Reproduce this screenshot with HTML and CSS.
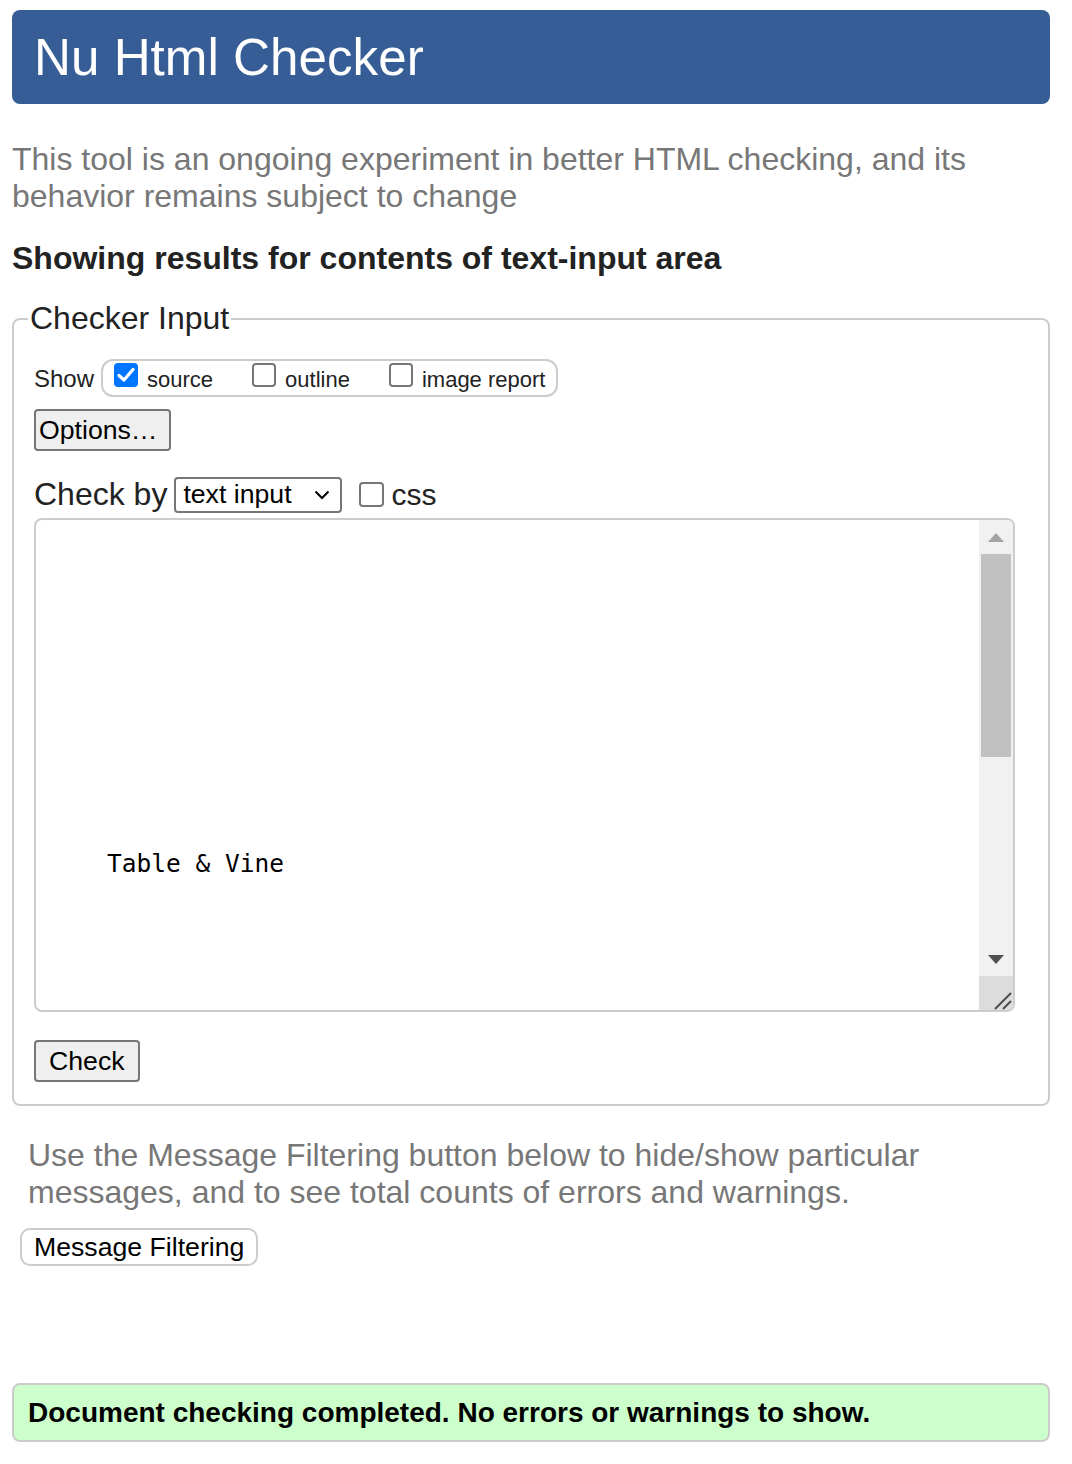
FILE: index.html
```html
<!DOCTYPE html>
<html lang="en">
<head>
<meta charset="utf-8">
<title>Nu Html Checker</title>
<link rel="stylesheet" href="styles.css">
</head>
<body>
<h1 class="title">Nu Html Checker</h1>
<p class="intro">This tool is an ongoing experiment in better HTML checking, and its behavior remains subject to change</p>
<h2 class="results-heading">Showing results for contents of text-input area</h2>
<form class="checker-form">
  <fieldset class="checker-input">
    <legend class="checker-legend">Checker Input</legend>
    <div class="show-row">
      <span class="show-label">Show</span>
      <div class="show-box">
        <label class="opt"><span class="cb cb-checked"><svg width="18" height="16" viewBox="0 0 18 16"><path d="M2 8.5 L7 13 L16 2.5" fill="none" stroke="#fff" stroke-width="3.2" stroke-linecap="round" stroke-linejoin="round"/></svg></span><span class="opt-text">source</span></label>
        <label class="opt"><span class="cb"></span><span class="opt-text">outline</span></label>
        <label class="opt"><span class="cb"></span><span class="opt-text">image report</span></label>
      </div>
    </div>
    <button type="button" class="btn btn-options">Options…</button>
    <div class="checkby-row">
      <span class="checkby-label">Check by</span>
      <span class="select"><span>text input</span><svg width="16" height="10" viewBox="0 0 16 10"><path d="M1.5 1.5 L8 8 L14.5 1.5" fill="none" stroke="#000" stroke-width="2"/></svg></span>
      <label class="opt opt-css"><span class="cb"></span><span class="css-text">css</span></label>
    </div>
    <div class="editor">
      <div class="editor-text">Table &amp; Vine</div>
      <div class="vscroll">
        <div class="sb-btn"><svg width="16" height="9" viewBox="0 0 16 9"><path d="M0 9 L8 0 L16 9 Z" fill="#a3a3a3"/></svg></div>
        <div class="sb-track"><div class="sb-thumb"></div></div>
        <div class="sb-btn"><svg width="16" height="9" viewBox="0 0 16 9"><path d="M0 0 L16 0 L8 9 Z" fill="#505050"/></svg></div>
        <div class="sb-corner"><svg width="34" height="34" viewBox="0 0 34 34"><path d="M16 33 L32 17 M24 33 L32 25" stroke="#4d4d4d" stroke-width="2"/></svg></div>
      </div>
    </div>
    <button type="button" class="btn btn-check">Check</button>
  </fieldset>
</form>
<div class="filter-section">
  <p class="filter-note">Use the Message Filtering button below to hide/show particular messages, and to see total counts of errors and warnings.</p>
  <button type="button" class="btn btn-filter">Message Filtering</button>
</div>
<div class="success">Document checking completed. No errors or warnings to show.</div>
</body>
</html>
```
FILE: styles.css
```css
* { box-sizing: border-box; }
html { background: #fff; }
body {
  margin: 0;
  padding: 10px 22px 20px 12px;
  font-family: "Liberation Sans", Arial, sans-serif;
  font-size: 32px;
  line-height: 37px;
  color: #222;
}
.title {
  margin: 0;
  height: 94px;
  padding-left: 22px;
  background: #365d95;
  color: #fff;
  border-radius: 8px;
  font-size: 51.2px;
  font-weight: normal;
  line-height: 96px;
}
.intro { margin: 37px 0 0; color: #777; }
.results-heading {
  margin: 25px 0 0;
  font-size: 32px;
  font-weight: bold;
  line-height: 37px;
}
.checker-form { margin: 23px 0 0; }
.checker-input {
  margin: 0;
  min-width: 0;
  padding: 22px 20px 22px 20px;
  border: 2px solid #ccc;
  border-radius: 8px;
}
.checker-legend {
  padding: 0 2px;
  margin-left: -6px;
  font-size: 32px;
  line-height: 37px;
}
.show-row {
  display: flex;
  align-items: center;
  gap: 7px;
  height: 38px;
}
.show-label { font-size: 24px; }
.show-box {
  display: flex;
  align-items: center;
  gap: 39px;
  height: 38px;
  padding: 0 11px 0 11px;
  border: 2px solid #ccc;
  border-radius: 12px;
  font-size: 22px;
  line-height: 26px;
}
.opt { display: flex; align-items: center; gap: 9px; }
.cb {
  display: flex;
  align-items: center;
  justify-content: center;
  width: 24px;
  height: 24px;
  border: 2px solid #767676;
  border-radius: 4px;
  background: #fff;
}
.cb-checked { background: #0075ff; border-color: #0075ff; }
.show-box .cb { margin-top: -6px; }
.opt-text { margin-top: 4px; }
.btn {
  display: block;
  font-family: "Liberation Sans", Arial, sans-serif;
  font-size: 26.67px;
  line-height: 32px;
  color: #000;
  background: #efefef;
  border: 2px solid #767676;
  border-radius: 4px;
}
.btn-options {
  margin-top: 12px;
  width: 137px;
  height: 42px;
  padding: 3px 12px 3px 3px;
  text-align: left;
}
.checkby-row {
  display: flex;
  align-items: center;
  height: 37px;
  margin-top: 25px;
}
.checkby-label { margin-right: 7px; }
.select {
  display: flex;
  align-items: center;
  justify-content: space-between;
  width: 168px;
  height: 36px;
  padding: 0 10px 0 7px;
  border: 2px solid #767676;
  border-radius: 4px;
  font-size: 26.67px;
  color: #000;
}
.opt-css { margin-left: 17px; gap: 7px; }
.opt-css .cb { width: 25px; height: 25px; }
.css-text { font-size: 30px; }
.editor {
  display: flex;
  width: 981px;
  height: 494px;
  margin-top: 5px;
  border: 2px solid #ccc;
  border-radius: 8px;
  overflow: hidden;
}
.editor-text {
  flex: 1;
  padding: 329px 0 0 71px;
  font-family: "DejaVu Sans Mono", "Liberation Mono", monospace;
  font-size: 24.5px;
  line-height: 30px;
  color: #000;
  white-space: pre;
}
.vscroll {
  display: flex;
  flex-direction: column;
  width: 34px;
  background: #f1f1f1;
}
.sb-btn {
  display: flex;
  align-items: center;
  justify-content: center;
  height: 34px;
}
.sb-track { flex: 1; padding: 0 2px; }
.sb-thumb { height: 203px; background: #c1c1c1; }
.sb-corner { height: 34px; background: #dcdcdc; }
.sb-corner svg { display: block; }
.btn-check { margin-top: 28px; height: 42px; padding: 3px 13px; }
.filter-section { margin-top: 31px; }
.filter-note { margin: 0; padding-left: 16px; color: #777; }
.btn-filter {
  margin: 17px 0 0 8px;
  height: 38px;
  padding: 1px 12px;
  background: #fff;
  border-color: #ccc;
  border-radius: 10px;
}
.success {
  display: flex;
  align-items: center;
  height: 59px;
  margin-top: 117px;
  padding: 0 14px;
  border: 2px solid #ccc;
  border-radius: 8px;
  background: #cfc;
  color: #000;
  font-size: 28px;
  font-weight: bold;
}
```
